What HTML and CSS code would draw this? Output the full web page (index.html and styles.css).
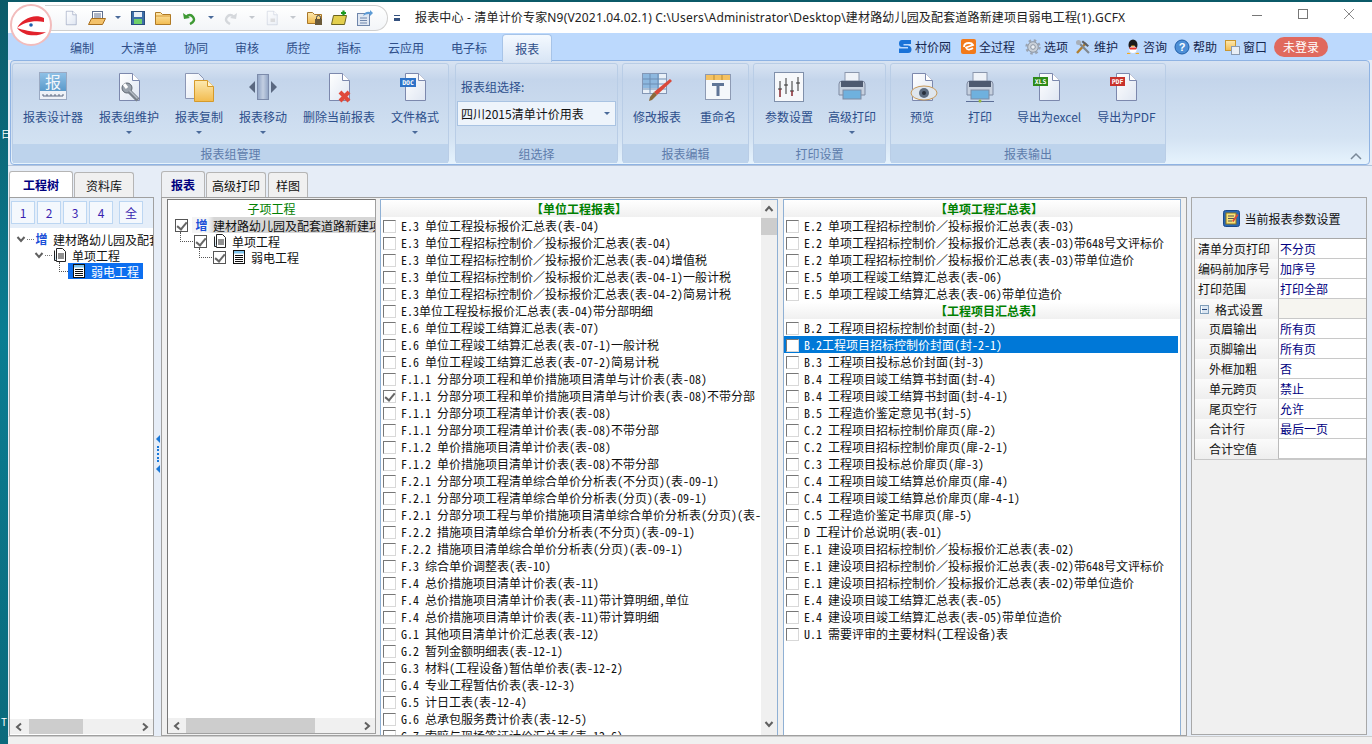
FILE: index.html
```html
<!DOCTYPE html>
<html lang="zh-CN">
<head>
    <meta charset="UTF-8">
    <title>报表中心 - 清单计价专家N9</title>
    <link rel="stylesheet" href="styles.css">
</head>
<body>

    <!-- shared icon parts -->
    <svg class="sprite" width="0" height="0">
        <defs>
            <linearGradient id="gPage" x1="0" y1="0" x2="1" y2="1"><stop offset="0" stop-color="#ffffff"/><stop offset="1" stop-color="#dfe6f2"/></linearGradient>
            <linearGradient id="gYellow" x1="0" y1="0" x2="0" y2="1"><stop offset="0" stop-color="#fde9b0"/><stop offset="1" stop-color="#f2bb4e"/></linearGradient>
            <linearGradient id="gBlue" x1="0" y1="0" x2="0" y2="1"><stop offset="0" stop-color="#8fc0e6"/><stop offset="1" stop-color="#5a9acb"/></linearGradient>
            <linearGradient id="gSteel" x1="0" y1="0" x2="1" y2="0"><stop offset="0" stop-color="#8fa3c4"/><stop offset="0.5" stop-color="#c3cfe2"/><stop offset="1" stop-color="#8fa3c4"/></linearGradient>
            <symbol id="page" viewBox="0 0 32 32"><path d="M6.5 2.5h13l7 7v20h-20z" fill="url(#gPage)" stroke="#7c88ad"/><path d="M19.5 2.5v7h7" fill="#fff" stroke="#7c88ad"/></symbol>
            <symbol id="printer" viewBox="0 0 32 32">
                <rect x="9" y="1.5" width="14" height="11" fill="#eef2f8" stroke="#8b97ad"/>
                <path d="M3 13q0-3 3-3h20q3 0 3 3v11H3z" fill="#c6d0de" stroke="#7f8ba3"/>
                <rect x="5" y="10" width="22" height="6" fill="#4e5a70"/>
                <rect x="7" y="19" width="18" height="9" fill="#6fb1de" stroke="#7f8ba3"/>
            </symbol>
            <symbol id="chev-left" viewBox="0 0 10 10"><path d="M7 1.5L3 5l4 3.5" fill="none" stroke="#606060" stroke-width="2"/></symbol>
            <symbol id="chev-right" viewBox="0 0 10 10"><path d="M3 1.5L7 5 3 8.5" fill="none" stroke="#606060" stroke-width="2"/></symbol>
            <symbol id="chev-up" viewBox="0 0 10 10"><path d="M1.5 7L5 3l3.5 4" fill="none" stroke="#606060" stroke-width="2"/></symbol>
            <symbol id="chev-down" viewBox="0 0 10 10"><path d="M1.5 3L5 7l3.5-4" fill="none" stroke="#606060" stroke-width="2"/></symbol>
            <symbol id="node-multi" viewBox="0 0 14 14"><path d="M3.5 .5h6l3 3v10h-9z" fill="#fff" stroke="#222"/><path d="M1.5 2.5v10h2" fill="#cfe8f7" stroke="#222"/><path d="M5 6h6M5 8h6M5 10h6" stroke="#222"/></symbol>
            <symbol id="node-sheet" viewBox="0 0 14 14"><rect x="1.5" y=".5" width="11" height="13" fill="#fff" stroke="#111"/><rect x="2" y="1" width="10" height="2.5" fill="#7fc4ee"/><path d="M3 5.5h8M3 7.5h8M3 9.5h8M3 11.5h8" stroke="#111"/></symbol>
        </defs>
    </svg>

    <span class="desk-glyph desk-top">日</span>
    <span class="desk-glyph desk-bottom">T</span>

    <div class="window">

        <!-- Title bar -->
        <div class="titlebar">
            <svg class="logo" viewBox="0 0 42 42">
                <circle cx="21" cy="21" r="20" fill="#fff" stroke="#f2bcbc" stroke-width="2"/>
                <path d="M34 14C24 9 12 15 7 24 13 19 23 16 34 18z" fill="#e2222c"/>
                <path d="M7 24c7 2 17 5 29 4-8 5-22 5-29-4z" fill="#e2222c"/>
                <circle cx="21" cy="21" r="1.800" fill="#1d5fae"/>
            </svg>
            <div class="qat">
                <span class="qi w26"><svg width="16" height="16" viewBox="0 0 32 32"><use href="#page"/></svg></span>
                <span class="qi w26"><svg width="18" height="16" viewBox="0 0 18 16"><rect x="4.5" y="1.5" width="10" height="9" fill="#fff" stroke="#5e6f8f"/><path d="M6 4h7M6 6h7M6 8h7" stroke="#5e6f8f"/><path d="M.5 14.500l3-6h14l-3 6z" fill="#f3c26b" stroke="#a86f1e"/></svg></span>
                <span class="qi w16"><i class="caret"></i></span>
                <span class="qi w24"><svg width="14" height="14" viewBox="0 0 14 14"><rect x=".5" y=".5" width="13" height="13" fill="#3c6ea8" stroke="#2a4e7e"/><rect x="3" y="1" width="8" height="5" fill="#e8eef7"/><rect x="3" y="8" width="8" height="5" fill="#6fd06a"/></svg></span>
                <span class="qi w26"><svg width="16" height="14" viewBox="0 0 16 14"><path d="M.5 13.500v-12h5l2 2h8v10z" fill="url(#gYellow)" stroke="#b07a25"/><path d="M1 5h14" stroke="#d99a35"/></svg></span>
                <span class="qi w26"><svg width="14" height="14" viewBox="0 0 14 14"><path d="M4 6q4-4 7 0t-3 7" fill="none" stroke="#3f9a34" stroke-width="2.400"/><path d="M1 2l1 6 6-1z" fill="#3f9a34"/></svg></span>
                <span class="qi w18"><i class="caret"></i></span>
                <span class="qi w22"><svg width="14" height="14" viewBox="0 0 14 14"><path d="M10 6q-4-4-7 0t3 7" fill="none" stroke="#d5d8dc" stroke-width="2.400"/><path d="M13 2l-1 6-6-1z" fill="#d5d8dc"/></svg></span>
                <span class="qi w20"><i class="caret off"></i></span>
                <span class="qi w20"><svg width="16" height="16" viewBox="0 0 32 32" opacity=".45"><use href="#page"/><rect x="13" y="17" width="9" height="7" fill="#bbb"/></svg></span>
                <span class="qi w22"><i class="caret off"></i></span>
                <span class="qi w22"><svg width="16" height="16" viewBox="0 0 16 16"><path d="M.5 13.500v-11h5l2 2h7v9z" fill="url(#gYellow)" stroke="#a8772a"/><rect x="8" y="9" width="7" height="6" fill="#6b5a3a"/><path d="M9.500 9V7.500a2 2 0 0 1 4 0V9" fill="none" stroke="#444"/></svg></span>
                <span class="qi w26"><svg width="16" height="16" viewBox="0 0 16 16"><path d="M.5 14.500l2-9h13l-2 9z" fill="#e3cf4e" stroke="#6b6320"/><path d="M10 3h5M12.500 .5v5" stroke="#1e9a22" stroke-width="2.200"/></svg></span>
                <span class="qi w26"><svg width="16" height="16" viewBox="0 0 16 16"><rect x=".5" y="3.500" width="12" height="12" fill="#dfe7f2" stroke="#6f86ab"/><path d="M3 8h7M3 10.500h7M3 13h7" stroke="#6f86ab"/><path d="M6 6q2-5 7-4V0l3 3-3 3V4q-4-.5-7 2z" fill="#5d9bd5"/></svg></span>
            </div>
            <span class="qat-more"></span>
            <span class="title-text">报表中心 - 清单计价专家N9(V2021.04.02.1) C:\Users\Administrator\Desktop\建材路幼儿园及配套道路新建项目弱电工程(1).GCFX</span>
            <div class="win-btns">
                <span class="win-btn"><svg width="12" height="12" viewBox="0 0 12 12"><path d="M1 6.500h10" stroke="#777"/></svg></span>
                <span class="win-btn"><svg width="12" height="12" viewBox="0 0 12 12"><rect x="1.500" y=".5" width="9" height="9" fill="none" stroke="#777"/></svg></span>
                <span class="win-btn"><svg width="12" height="12" viewBox="0 0 12 12"><path d="M1 0l10 10M11 0L1 10" stroke="#888"/></svg></span>
            </div>
        </div>

        <!-- Ribbon tabs -->
        <div class="tabrow">
            <span class="rtab">编制</span>
            <span class="rtab">大清单</span>
            <span class="rtab">协同</span>
            <span class="rtab">审核</span>
            <span class="rtab">质控</span>
            <span class="rtab">指标</span>
            <span class="rtab">云应用</span>
            <span class="rtab">电子标</span>
            <span class="rtab active">报表</span>

            <div class="tools">
                <span class="tool"><svg width="14" height="16" viewBox="0 0 14 16"><path d="M13 1H4Q1 1 1 4.500T4 8h6v1.500H1V14h9q3.500 0 3.500-3.500T10 6.500H5.500V5H13z" fill="#1a73d8"/></svg>村价网</span>
                <span class="tool tool-wide"><svg width="15" height="15" viewBox="0 0 15 15"><rect width="15" height="15" rx="2" fill="#f27a1a"/><path d="M3 8q0-4 5-4 3 0 4 2L5 8.500q1 2.500 3.500 2 2-.5 3.500-1.500" fill="none" stroke="#fff" stroke-width="1.800"/></svg>全过程</span>
                <span class="tool tool-wide"><svg width="16" height="16" viewBox="0 0 16 16"><circle cx="8" cy="8" r="5.300" fill="#c9d0d8" stroke="#8a94a2" stroke-width="1"/><circle cx="8" cy="8" r="6.500" fill="none" stroke="#9aa4b2" stroke-width="2.400" stroke-dasharray="2.500 2.600"/><circle cx="8" cy="8" r="2.300" fill="#eef2f6" stroke="#8a94a2"/></svg>选项</span>
                <span class="tool tool-tight"><svg width="16" height="16" viewBox="0 0 16 16"><path d="M2 14L11 4" stroke="#b07e2e" stroke-width="2.400"/><path d="M8 1.500l6 5-1.500 1.500-6-5z" fill="#5a5f68"/><path d="M14 14L5 5" stroke="#808890" stroke-width="2.200"/><circle cx="3.500" cy="3.500" r="2.500" fill="#a8afb8"/></svg>维护</span>
                <span class="tool"><svg width="14" height="16" viewBox="0 0 14 16"><ellipse cx="7" cy="6" rx="4.500" ry="5.500" fill="#1b1b1b"/><ellipse cx="7" cy="10.500" rx="3.600" ry="3.500" fill="#fff"/><path d="M3 8.500h8l-1 2H4z" fill="#e8312a"/><path d="M1 14q2-1 4 1H1zM13 14q-2-1-4 1h4z" fill="#f6a81c"/><path d="M5 6.500h4L7 8z" fill="#f6a81c"/></svg>咨询</span>
                <span class="tool tool-tight"><svg width="16" height="16" viewBox="0 0 16 16"><circle cx="8" cy="8" r="7" fill="#4d8fd6" stroke="#1f5ea8"/><text x="8" y="12" class="svg-help">?</text></svg>帮助</span>
                <span class="tool"><svg width="15" height="16" viewBox="0 0 15 16"><rect x=".5" y="1.500" width="10" height="10" fill="url(#gYellow)" stroke="#c9962f"/><rect x="6.500" y="7.500" width="8" height="8" fill="#e9eef5" stroke="#8a9ab0"/></svg>窗口</span>
                <span class="login-pill">未登录</span>
            </div>
        </div>

        <!-- Ribbon -->
        <div class="ribbon">
            <div class="group g-manage">
                <div class="group-body">
                    <div class="rbtn">
                        <svg width="32" height="32" viewBox="0 0 32 32"><rect x="2.500" y="1.500" width="27" height="27" fill="#eef2f8" stroke="#9aa9c2"/><rect x="3" y="2" width="26" height="18" fill="url(#gBlue)"/><text x="16" y="17" class="svg-bao">报</text><path d="M6 25h20M6 25v-2M10 25v-2M14 25v-2M18 25v-2M22 25v-2M26 25v-2" stroke="#5d6b83" fill="none"/></svg>
                        <span class="rlabel">报表设计器</span>
                    </div>
                    <div class="rbtn">
                        <svg width="32" height="32" viewBox="0 0 32 32"><use href="#page"/><circle cx="14" cy="17" r="5" fill="#9aa2ac" stroke="#5e6670"/><path d="M11 13l3 4" stroke="#fff" stroke-width="3"/><path d="M16 20l9 9" stroke="#79818b" stroke-width="4.500"/><path d="M16.500 19.500l8 8" stroke="#b7bec7" stroke-width="1.500"/></svg>
                        <span class="rlabel">报表组维护</span>
                        <i class="caret"></i>
                    </div>
                    <div class="rbtn">
                        <svg width="32" height="32" viewBox="0 0 32 32"><path d="M2.500 2.500h13l5 5v20h-18z" fill="url(#gPage)" stroke="#8c97b5"/><path d="M11.500 9.500h13l6 6v15h-19z" fill="url(#gYellow)" stroke="#d59a2b"/><path d="M24.500 9.500v6h6" fill="#fff3cf" stroke="#d59a2b"/></svg>
                        <span class="rlabel">报表复制</span>
                        <i class="caret"></i>
                    </div>
                    <div class="rbtn">
                        <svg width="32" height="32" viewBox="0 0 32 32"><rect x="10.500" y="3.500" width="11" height="25" fill="url(#gSteel)" stroke="#7c8bab"/><path d="M8 10v12l-6-6zM24 10v12l6-6z" fill="#5a6880"/></svg>
                        <span class="rlabel">报表移动</span>
                        <i class="caret"></i>
                    </div>
                    <div class="rbtn">
                        <svg width="32" height="32" viewBox="0 0 32 32"><use href="#page"/><path d="M17 21l9 9M26 21l-9 9" stroke="#e0493a" stroke-width="4"/></svg>
                        <span class="rlabel">删除当前报表</span>
                    </div>
                    <div class="rbtn">
                        <svg width="32" height="32" viewBox="0 0 32 32"><use href="#page"/><rect x="1" y="7" width="16" height="9" fill="#2e73c8"/><text x="9" y="14" class="svg-tag">DOC</text></svg>
                        <span class="rlabel">文件格式</span>
                        <i class="caret"></i>
                    </div>
                </div>
                <div class="group-foot">报表组管理</div>
            </div>

            <div class="group g-select">
                <div class="group-body select-body">
                    <span class="select-label">报表组选择:</span>
                    <div class="select-box"><span>四川2015清单计价用表</span><i class="caret"></i></div>
                </div>
                <div class="group-foot">组选择</div>
            </div>

            <div class="group g-edit">
                <div class="group-body">
                    <div class="rbtn">
                        <svg width="32" height="32" viewBox="0 0 32 32"><rect x="1.500" y="2.500" width="24" height="20" fill="#e9f0f8" stroke="#8497b5"/><rect x="2" y="3" width="16" height="14" fill="#8db8df"/><path d="M2 8h23M2 13h23M2 18h23M9 3v19M17 3v19" stroke="#6d8db3"/><path d="M29 8l2 2-15 14-3-3z" fill="#d9493a"/><path d="M13 21l3 3-5 5-3 1 1-4z" fill="#8a6a3a"/></svg>
                        <span class="rlabel">修改报表</span>
                    </div>
                    <div class="rbtn">
                        <svg width="32" height="32" viewBox="0 0 32 32"><rect x="3.500" y="3.500" width="25" height="25" fill="#f4f7fb" stroke="#8d9ab3"/><rect x="4" y="4" width="24" height="5" fill="#f4c161"/><path d="M12 4v5M20 4v5" stroke="#b98a31"/><path d="M10 12h12v3h-4.500v10h-3V15H10z" fill="#5f7597"/></svg>
                        <span class="rlabel">重命名</span>
                    </div>
                </div>
                <div class="group-foot">报表编辑</div>
            </div>

            <div class="group g-print">
                <div class="group-body">
                    <div class="rbtn">
                        <svg width="32" height="32" viewBox="0 0 32 32"><rect x="1.500" y="1.500" width="29" height="29" fill="#f6f8fb" stroke="#8090ab"/><path d="M7 10v16M13 7v16M19 10v15M25 6v14" stroke="#333"/><path d="M5 18h4M11 14h4M17 20h4M23 12h4" stroke="#333"/><path d="M7 18v8M19 20v5" stroke="#b0202c"/></svg>
                        <span class="rlabel">参数设置</span>
                    </div>
                    <div class="rbtn">
                        <svg width="32" height="32" viewBox="0 0 32 32"><use href="#printer"/></svg>
                        <span class="rlabel">高级打印</span>
                        <i class="caret"></i>
                    </div>
                </div>
                <div class="group-foot">打印设置</div>
            </div>

            <div class="group g-output">
                <div class="group-body">
                    <div class="rbtn btn-short">
                        <svg width="32" height="32" viewBox="0 0 32 32"><use href="#page"/><ellipse cx="18" cy="22" rx="13" ry="7" fill="#dfe6ee" stroke="#c89a5a"/><circle cx="18" cy="22" r="5" fill="#5d6c80"/><circle cx="18" cy="22" r="2" fill="#27303c"/></svg>
                        <span class="rlabel">预览</span>
                    </div>
                    <div class="rbtn btn-short">
                        <svg width="32" height="32" viewBox="0 0 32 32"><use href="#printer"/><path d="M2 30.500h28" stroke="#5c6e96"/><circle cx="16" cy="30" r="1.500" fill="#9ab83a"/></svg>
                        <span class="rlabel">打印</span>
                    </div>
                    <div class="rbtn btn-excel">
                        <svg width="32" height="32" viewBox="0 0 32 32"><use href="#page"/><rect x="0" y="6" width="15" height="9" fill="#2e8b17"/><text x="7.500" y="13" class="svg-tag">XLS</text></svg>
                        <span class="rlabel">导出为excel</span>
                    </div>
                    <div class="rbtn btn-pdf">
                        <svg width="32" height="32" viewBox="0 0 32 32"><use href="#page"/><rect x="0" y="6" width="15" height="9" fill="#c8322c"/><text x="7.500" y="13" class="svg-tag">PDF</text></svg>
                        <span class="rlabel">导出为PDF</span>
                    </div>
                </div>
                <div class="group-foot">报表输出</div>
            </div>

            <div class="ribbon-rest">
                <svg class="collapse" width="12" height="8" viewBox="0 0 12 8"><path d="M1 7l5-5 5 5" fill="none" stroke="#7a8898" stroke-width="1.500"/></svg>
            </div>
        </div>

        <!-- Main area -->
        <div class="main">

            <div class="side">
                <div class="tabs">
                    <span class="tab active">工程树</span>
                    <span class="tab tab-lib">资料库</span>
                </div>
                <div class="side-panel">
                    <div class="level-bar">
                        <span class="level">1</span>
                        <span class="level">2</span>
                        <span class="level">3</span>
                        <span class="level">4</span>
                        <span class="level level-all">全</span>
                    </div>
                    <div class="tree side-tree">
                        <div class="tree-row">
                            <svg class="twist" width="10" height="10"><use href="#chev-down"/></svg>
                            <i class="dots"></i>
                            <span class="zeng">增</span>
                            <span class="tree-text">建材路幼儿园及配套道路新建项目</span>
                        </div>
                        <div class="tree-row row-2">
                            <svg class="twist" width="10" height="10"><use href="#chev-down"/></svg>
                            <i class="dots"></i>
                            <svg class="node" width="14" height="14"><use href="#node-multi"/></svg>
                            <span class="tree-text">单项工程</span>
                        </div>
                        <div class="tree-row row-3">
                            <i class="elbow"></i>
                            <span class="tree-sel"><svg class="node" width="14" height="14"><use href="#node-sheet"/></svg><span>弱电工程</span></span>
                        </div>
                    </div>
                    <div class="hscroll side-scroll">
                        <svg width="10" height="10"><use href="#chev-left"/></svg>
                        <span class="track"><b class="thumb"></b></span>
                        <svg width="10" height="10"><use href="#chev-right"/></svg>
                    </div>
                </div>
            </div>

            <div class="splitter">
                <i class="grip-arrow"></i>
                <i class="grip-dots"></i>
                <i class="grip-arrow"></i>
            </div>

            <div class="center">
                <div class="tabs">
                    <span class="tab active tab-report">报表</span>
                    <span class="tab tab-print">高级打印</span>
                    <span class="tab tab-sample">样图</span>
                </div>
                <div class="frame">

                    <div class="child-panel">
                        <div class="child-head">子项工程</div>
                        <div class="tree child-tree">
                            <div class="tree-row">
                                <i class="tick-box on"></i>
                                <span class="tree-first"><span class="zeng">增</span><span class="tree-text">建材路幼儿园及配套道路新建项目弱电工程</span></span>
                            </div>
                            <div class="tree-row row-2">
                                <i class="elbow"></i>
                                <i class="tick-box on"></i>
                                <svg class="node" width="14" height="14"><use href="#node-multi"/></svg>
                                <span class="tree-text">单项工程</span>
                            </div>
                            <div class="tree-row row-3">
                                <i class="elbow"></i>
                                <i class="tick-box on"></i>
                                <svg class="node" width="14" height="14"><use href="#node-sheet"/></svg>
                                <span class="tree-text">弱电工程</span>
                            </div>
                        </div>
                        <div class="hscroll child-scroll">
                            <svg width="10" height="10"><use href="#chev-left"/></svg>
                            <span class="track"><b class="thumb"></b></span>
                            <svg width="10" height="10"><use href="#chev-right"/></svg>
                        </div>
                    </div>

                    <div class="report-list list-a">
                        <div class="list-scroll-area">
                            <div class="list-head">【单位工程报表】</div>
                            <ul class="rows">
                                <li><i class="cb"></i>E.3 单位工程投标报价汇总表(表-04)</li>
                                <li><i class="cb"></i>E.3 单位工程招标控制价<span class="fw">／</span>投标报价汇总表(表-04)</li>
                                <li><i class="cb"></i>E.3 单位工程招标控制价<span class="fw">／</span>投标报价汇总表(表-04)增值税</li>
                                <li><i class="cb"></i>E.3 单位工程招标控制价<span class="fw">／</span>投标报价汇总表(表-04-1)一般计税</li>
                                <li><i class="cb"></i>E.3 单位工程招标控制价<span class="fw">／</span>投标报价汇总表(表-04-2)简易计税</li>
                                <li><i class="cb"></i>E.3单位工程投标报价汇总表(表-04)带分部明细</li>
                                <li><i class="cb"></i>E.6 单位工程竣工结算汇总表(表-07)</li>
                                <li><i class="cb"></i>E.6 单位工程竣工结算汇总表(表-07-1)一般计税</li>
                                <li><i class="cb"></i>E.6 单位工程竣工结算汇总表(表-07-2)简易计税</li>
                                <li><i class="cb"></i>F.1.1 分部分项工程和单价措施项目清单与计价表(表-08)</li>
                                <li><i class="cb checked"></i>F.1.1 分部分项工程和单价措施项目清单与计价表(表-08)不带分部</li>
                                <li><i class="cb"></i>F.1.1 分部分项工程清单计价表(表-08)</li>
                                <li><i class="cb"></i>F.1.1 分部分项工程清单计价表(表-08)不带分部</li>
                                <li><i class="cb"></i>F.1.2 单价措施项目清单计价表(表-08)</li>
                                <li><i class="cb"></i>F.1.2 单价措施项目清单计价表(表-08)不带分部</li>
                                <li><i class="cb"></i>F.2.1 分部分项工程清单综合单价分析表(不分页)(表-09-1)</li>
                                <li><i class="cb"></i>F.2.1 分部分项工程清单综合单价分析表(分页)(表-09-1)</li>
                                <li><i class="cb"></i>F.2.1 分部分项工程与单价措施项目清单综合单价分析表(分页)(表-09-1)</li>
                                <li><i class="cb"></i>F.2.2 措施项目清单综合单价分析表(不分页)(表-09-1)</li>
                                <li><i class="cb"></i>F.2.2 措施项目清单综合单价分析表(分页)(表-09-1)</li>
                                <li><i class="cb"></i>F.3 综合单价调整表(表-10)</li>
                                <li><i class="cb"></i>F.4 总价措施项目清单计价表(表-11)</li>
                                <li><i class="cb"></i>F.4 总价措施项目清单计价表(表-11)带计算明细,单位</li>
                                <li><i class="cb"></i>F.4 总价措施项目清单计价表(表-11)带计算明细</li>
                                <li><i class="cb"></i>G.1 其他项目清单计价汇总表(表-12)</li>
                                <li><i class="cb"></i>G.2 暂列金额明细表(表-12-1)</li>
                                <li><i class="cb"></i>G.3 材料(工程设备)暂估单价表(表-12-2)</li>
                                <li><i class="cb"></i>G.4 专业工程暂估价表(表-12-3)</li>
                                <li><i class="cb"></i>G.5 计日工表(表-12-4)</li>
                                <li><i class="cb"></i>G.6 总承包服务费计价表(表-12-5)</li>
                                <li><i class="cb"></i>G.7 索赔与现场签证计价汇总表(表-12-6)</li>
                            </ul>
                        </div>
                        <div class="vscroll">
                            <svg width="10" height="10"><use href="#chev-up"/></svg>
                            <span class="vtrack"><b class="vthumb"></b></span>
                            <svg width="10" height="10"><use href="#chev-down"/></svg>
                        </div>
                    </div>

                    <div class="report-list list-b">
                        <div class="list-scroll-area">
                            <div class="list-head">【单项工程汇总表】</div>
                            <ul class="rows">
                                <li><i class="cb"></i>E.2 单项工程招标控制价<span class="fw">／</span>投标报价汇总表(表-03)</li>
                                <li><i class="cb"></i>E.2 单项工程招标控制价<span class="fw">／</span>投标报价汇总表(表-03)带648号文评标价</li>
                                <li><i class="cb"></i>E.2 单项工程招标控制价<span class="fw">／</span>投标报价汇总表(表-03)带单位造价</li>
                                <li><i class="cb"></i>E.5 单项工程竣工结算汇总表(表-06)</li>
                                <li><i class="cb"></i>E.5 单项工程竣工结算汇总表(表-06)带单位造价</li>
                            </ul>
                            <div class="list-head">【工程项目汇总表】</div>
                            <ul class="rows">
                                <li><i class="cb"></i>B.2 工程项目招标控制价封面(封-2)</li>
                                <li class="selected"><i class="cb"></i>B.2工程项目招标控制价封面(封-2-1)</li>
                                <li><i class="cb"></i>B.3 工程项目投标总价封面(封-3)</li>
                                <li><i class="cb"></i>B.4 工程项目竣工结算书封面(封-4)</li>
                                <li><i class="cb"></i>B.4 工程项目竣工结算书封面(封-4-1)</li>
                                <li><i class="cb"></i>B.5 工程造价鉴定意见书(封-5)</li>
                                <li><i class="cb"></i>C.2 工程项目招标控制价扉页(扉-2)</li>
                                <li><i class="cb"></i>C.2 工程项目招标控制价扉页(扉-2-1)</li>
                                <li><i class="cb"></i>C.3 工程项目投标总价扉页(扉-3)</li>
                                <li><i class="cb"></i>C.4 工程项目竣工结算总价扉页(扉-4)</li>
                                <li><i class="cb"></i>C.4 工程项目竣工结算总价扉页(扉-4-1)</li>
                                <li><i class="cb"></i>C.5 工程造价鉴定书扉页(扉-5)</li>
                                <li><i class="cb"></i>D 工程计价总说明(表-01)</li>
                                <li><i class="cb"></i>E.1 建设项目招标控制价<span class="fw">／</span>投标报价汇总表(表-02)</li>
                                <li><i class="cb"></i>E.1 建设项目招标控制价<span class="fw">／</span>投标报价汇总表(表-02)带648号文评标价</li>
                                <li><i class="cb"></i>E.1 建设项目招标控制价<span class="fw">／</span>投标报价汇总表(表-02)带单位造价</li>
                                <li><i class="cb"></i>E.4 建设项目竣工结算汇总表(表-05)</li>
                                <li><i class="cb"></i>E.4 建设项目竣工结算汇总表(表-05)带单位造价</li>
                                <li><i class="cb"></i>U.1 需要评审的主要材料(工程设备)表</li>
                            </ul>
                        </div>
                    </div>

                </div>
            </div>

            <div class="params">
                <div class="params-head">
                    <svg width="17" height="17" viewBox="0 0 17 17"><rect x=".5" y=".5" width="16" height="16" rx="2" fill="#2767b5" stroke="#1c4a8a"/><rect x="3" y="3" width="10" height="11" fill="#f7e27a" stroke="#8a7420"/><path d="M5 6h6M5 8.500h6M5 11h4" stroke="#555"/><path d="M9 11l5-7 1.500 1-5 7z" fill="#d9493a"/></svg>
                    <span>当前报表参数设置</span>
                </div>
                <div class="params-grid">
                    <span class="p-name">清单分页打印</span><span class="p-val">不分页</span>
                    <span class="p-name">编码前加序号</span><span class="p-val">加序号</span>
                    <span class="p-name">打印范围</span><span class="p-val">打印全部</span>
                    <span class="p-name p-group"><i class="minus"></i>格式设置</span><span class="p-val p-group-val"></span>
                    <span class="p-name p-sub">页眉输出</span><span class="p-val">所有页</span>
                    <span class="p-name p-sub">页脚输出</span><span class="p-val">所有页</span>
                    <span class="p-name p-sub">外框加粗</span><span class="p-val">否</span>
                    <span class="p-name p-sub">单元跨页</span><span class="p-val">禁止</span>
                    <span class="p-name p-sub">尾页空行</span><span class="p-val">允许</span>
                    <span class="p-name p-sub">合计行</span><span class="p-val">最后一页</span>
                    <span class="p-name p-sub">合计空值</span><span class="p-val"></span>
                </div>
            </div>

        </div>

        <div class="bottom-strip"></div>
    </div>

</body>
</html>
```

FILE: styles.css
```css
* {
    box-sizing: border-box;
}

body {
    margin: 0;
    height: 744px;
    overflow: hidden;
    background: linear-gradient(180deg, #0b5a68 0%, #0a7d92 45%, #0b6a7c 100%);
    font-family: "Noto Sans CJK SC", "Noto Sans", sans-serif;
    font-size: 12px;
    color: #111;
}

.sprite {
    display: block;
    height: 0;
}

.desk-glyph {
    position: absolute;
    left: 1px;
    color: #fff;
    font-size: 10px;
    line-height: 12px;
}

.desk-top { top: 128px; }
.desk-bottom { top: 716px; }

.window {
    margin: 2px 0 0 8px;
    height: 742px;
    display: flex;
    flex-direction: column;
    background: #e6edf7;
}

/* Title bar */
.titlebar {
    position: relative;
    height: 31px;
    flex: none;
    display: flex;
    align-items: center;
    background: #fff;
}

.logo {
    position: absolute;
    left: 2px;
    top: 2px;
    width: 42px;
    height: 42px;
    z-index: 5;
}

.qat {
    margin-left: 37px;
    width: 343px;
    height: 26px;
    padding-left: 13px;
    display: flex;
    align-items: center;
    border: 1px solid #cfcfcf;
    border-left: none;
    border-radius: 0 13px 13px 0;
    background: linear-gradient(180deg, #fff, #f3f5f8);
}

.qi {
    display: flex;
    justify-content: center;
    align-items: center;
    height: 20px;
}

.w16 { width: 16px; }
.w18 { width: 18px; }
.w20 { width: 20px; }
.w22 { width: 22px; }
.w24 { width: 24px; }
.w26 { width: 26px; }

.caret {
    display: block;
    width: 0;
    height: 0;
    border-left: 3px solid transparent;
    border-right: 3px solid transparent;
    border-top: 3px solid #4a6a9a;
}

.caret.off {
    border-top-color: #c4c8ce;
}

.qat-more {
    margin-left: 6px;
    width: 6px;
    height: 6px;
    border-top: 1px solid #35527f;
    border-bottom: 3px solid #35527f;
}

.title-text {
    margin-left: 15px;
    white-space: nowrap;
    font-family: "Noto Sans", "Noto Sans CJK SC", sans-serif;
    letter-spacing: 0.17px;
    line-height: 16px;
    color: #222;
}

.win-btns {
    margin-left: auto;
    display: flex;
    align-self: flex-start;
}

.win-btn {
    width: 46px;
    height: 26px;
    display: flex;
    justify-content: center;
    align-items: center;
}

/* Ribbon tabs */
.tabrow {
    height: 27px;
    flex: none;
    padding-left: 50px;
    display: flex;
    background: #bcd9fd;
}

.rtab {
    padding: 0 12px;
    margin-right: 3px;
    line-height: 30px;
    color: #2f4f8a;
}

.rtab.active {
    height: 28px;
    margin-top: 1px;
    line-height: 28px;
    border: 1px solid #a7c4e8;
    border-bottom: none;
    border-radius: 4px 4px 0 0;
    background: linear-gradient(180deg, #f4f9ff, #d8e5f5);
    z-index: 1;
}

.tools {
    margin-left: auto;
    margin-right: 44px;
    display: flex;
    align-items: center;
    gap: 8px;
}

.tool {
    display: flex;
    align-items: center;
    gap: 3px;
    color: #14264f;
    line-height: 16px;
}

.tool-wide { margin-left: 2px; }
.tool-tight { margin-left: -1px; }

.login-pill {
    width: 54px;
    height: 20px;
    margin-left: -1px;
    border-radius: 10px;
    background: #e0695e;
    color: #fff;
    text-align: center;
    line-height: 20px;
}

/* Ribbon */
.ribbon {
    height: 105px;
    flex: none;
    margin: 0 2px;
    padding: 2px 0 1px 1px;
    display: flex;
    border: 1px solid #8fb3e3;
    border-radius: 4px;
    background: linear-gradient(180deg, #d8e3f2 0%, #c4d5eb 18%, #d4e3f3 75%, #e6f3fd 100%);
}

.group {
    display: flex;
    flex-direction: column;
    margin-right: 4px;
    border: 1px solid #b9cde6;
    border-radius: 3px;
    background: linear-gradient(180deg, #d8e3f2 0%, #c4d5eb 16%, #d6e5f4 100%);
}

.group-body {
    height: 80px;
    display: flex;
    flex: none;
}

.group-foot {
    flex: 1;
    text-align: center;
    line-height: 19px;
    color: #5d7cab;
    background: #bdd3ec;
}

.g-manage { width: 437px; margin-right: 6px; }
.g-select { width: 163px; }
.g-edit { width: 127px; }
.g-print { width: 133px; }
.g-output { width: 276px; margin-right: 0; }

.g-manage .group-body { padding-left: 10px; gap: 16px; }
.g-edit .group-body { padding-left: 10px; gap: 19px; }
.g-print .group-body { padding-left: 11px; gap: 15px; }
.g-output .group-body { padding-left: 7px; gap: 10px; }

.rbtn {
    display: flex;
    flex-direction: column;
    align-items: center;
    padding-top: 7px;
}

.rlabel {
    margin-top: 6px;
    line-height: 16px;
    white-space: nowrap;
    color: #2d4f8c;
}

.rbtn .caret {
    margin-top: 6px;
}

.btn-short { width: 48px; }
.btn-excel { margin-left: 3px; }
.btn-pdf { margin-left: 6px; }

.select-body {
    flex-direction: column;
    padding-left: 1px;
}

.select-label {
    margin: 15px 0 0 4px;
    line-height: 16px;
    color: #2d4f8c;
}

.select-box {
    margin-top: 6px;
    width: 159px;
    height: 25px;
    padding: 0 5px 0 3px;
    display: flex;
    align-items: center;
    justify-content: space-between;
    border: 1px solid #a9c3e2;
    background: #eef4fb;
    color: #111;
}

.ribbon-rest {
    flex: 1;
    display: flex;
    align-items: flex-end;
    justify-content: flex-end;
    padding: 0 7px 3px 0;
}

/* Main area */
.main {
    flex: 1;
    min-height: 0;
    display: flex;
    padding: 5px 0 0 1px;
    border-top: 1px solid #b3c4dc;
}

.side {
    width: 145px;
    flex: none;
    display: flex;
    flex-direction: column;
}

.tabs {
    height: 26px;
    flex: none;
    display: flex;
    align-items: flex-end;
}

.tab {
    height: 25px;
    margin-left: 1px;
    line-height: 25px;
    text-align: center;
    border: 1px solid #b5b5b5;
    border-bottom: none;
    border-radius: 3px 3px 0 0;
    background: #f0f0f0;
    color: #111;
}

.tab.active {
    height: 26px;
    margin-left: 0;
    padding: 0 13px;
    border-color: #b5b5b5;
    background: #fff;
    color: #00007f;
    font-weight: 700;
    line-height: 26px;
}

.tab-lib { width: 60px; }
.tab-print { width: 60px; }
.tab-sample { width: 40px; margin-left: 2px; }

.tab.tab-report {
    width: 44px;
    padding: 0;
    margin-left: 0;
    background: #eef0f3;
}

.side-panel {
    flex: 1;
    display: flex;
    flex-direction: column;
    border: 1px solid #a0a0a0;
    background: #fff;
    min-height: 0;
}

.level-bar {
    height: 30px;
    flex: none;
    padding: 3px 0 0 1px;
    display: flex;
    gap: 2px;
    background: #e5eef9;
}

.level {
    width: 24px;
    height: 23px;
    border: 1px solid #bcd6f2;
    background: #f4f8fd;
    color: #3a1fb0;
    text-align: center;
    line-height: 21px;
}

.level-all {
    margin-left: 4px;
}

.tree {
    flex: 1;
    min-height: 0;
    overflow: hidden;
    color: #111;
}

.side-tree {
    padding: 3px 0 0 6px;
}

.tree-row {
    height: 16px;
    display: flex;
    align-items: center;
    white-space: nowrap;
}

.twist {
    flex: none;
}

.dots {
    width: 7px;
    margin: 0 1px;
    border-top: 1px dotted #777;
    flex: none;
}

.zeng {
    width: 13px;
    flex: none;
    color: #1a4fd8;
    font-weight: 700;
    font-size: 12px;
    line-height: 14px;
    text-align: center;
}

.tree-text {
    margin-left: 5px;
}

.node {
    flex: none;
}

.side-tree .row-2 {
    padding-left: 18px;
}

.side-tree .row-3 {
    padding-left: 43px;
}

.elbow {
    width: 9px;
    height: 10px;
    margin-top: -9px;
    flex: none;
    border-left: 1px dotted #555;
    border-bottom: 1px dotted #555;
}

.tree-sel {
    height: 16px;
    width: 75px;
    padding-left: 4px;
    flex: none;
    display: flex;
    align-items: center;
    gap: 5px;
    background: #0d6ff0;
    color: #fff;
}

.hscroll {
    height: 15px;
    flex: none;
    display: flex;
    align-items: center;
    background: #f0f0f0;
}

.hscroll svg {
    flex: none;
}

.track {
    flex: 1;
    height: 15px;
    display: block;
}

.thumb {
    display: block;
    height: 15px;
    background: #cdcdcd;
}

.side-scroll {
    margin-bottom: 1px;
    padding: 0 3px 0 4px;
}

.side-scroll .track {
    padding-left: 5px;
    padding-right: 57px;
}

.splitter {
    width: 7px;
    flex: none;
    display: flex;
    flex-direction: column;
    align-items: center;
    justify-content: center;
    gap: 3px;
    background: #e6edf7;
}

.grip-arrow {
    width: 0;
    height: 0;
    border-top: 4px solid transparent;
    border-bottom: 4px solid transparent;
    border-right: 4px solid #1a78d8;
}

.grip-dots {
    height: 16px;
    border-left: 2px dotted #1a78d8;
}

.center {
    width: 1026px;
    flex: none;
    display: flex;
    flex-direction: column;
}

.frame {
    flex: 1;
    min-height: 0;
    padding: 1px 6px 0 5px;
    display: flex;
    overflow: hidden;
    border: 1px solid #a0a0a0;
    background: #f0f0f0;
}

.child-panel {
    width: 209px;
    flex: none;
    margin-bottom: 1px;
    display: flex;
    flex-direction: column;
    border: 1px solid #a0a0a0;
    border-top-color: #777;
    border-left-color: #777;
    background: #fff;
}

.child-head {
    height: 17px;
    flex: none;
    text-align: center;
    color: #008000;
    line-height: 17px;
}

.child-tree {
    padding: 0 0 0 7px;
}

.tick-box {
    width: 13px;
    height: 13px;
    flex: none;
    position: relative;
    border: 1px solid #555;
    background: #fff;
}

.tick-box.on::after,
.cb.checked::after {
    content: "";
    position: absolute;
    left: 3px;
    top: 0;
    width: 4px;
    height: 8px;
    border-right: 2px solid #666;
    border-bottom: 2px solid #666;
    transform: rotate(40deg);
}

.tree-first {
    flex: 1;
    height: 16px;
    margin-left: 4px;
    min-width: 0;
    display: flex;
    align-items: center;
    overflow: hidden;
    background: linear-gradient(90deg, #f5f5f5 0 16px, #d6d6d6 22px);
}

.tree-first .zeng {
    margin-left: 3px;
}

.child-tree .row-2,
.child-tree .row-3 {
    gap: 1px;
}

.child-tree .row-2 { padding-left: 5px; }
.child-tree .row-3 { padding-left: 24px; }

.child-tree .elbow {
    width: 13px;
}

.child-tree .row-2 .tick-box,
.child-tree .row-3 .tick-box {
    margin-right: 5px;
}

.child-tree .row-2 .tree-text,
.child-tree .row-3 .tree-text {
    margin-left: 4px;
}

.child-scroll {
    padding: 0 3px 0 4px;
}

.child-scroll .track {
    padding-left: 4px;
    padding-right: 47px;
}

/* Report lists */
.report-list {
    margin-left: 4px;
    width: 398px;
    flex: none;
    display: flex;
    border: 1px solid #8fb0d4;
    border-bottom: none;
    background: #fff;
}

.list-b {
    margin-left: 5px;
    display: block;
}

.list-scroll-area {
    flex: 1;
    min-width: 0;
    overflow: hidden;
}

.list-head {
    height: 17px;
    text-align: center;
    line-height: 17px;
    color: #008000;
    font-weight: 700;
    background: linear-gradient(180deg, #fff, #f0f0f0);
}

.list-a .list-head { padding-left: 16px; }
.list-b .list-head { padding-left: 14px; }

.rows {
    list-style: none;
    margin: 0;
    padding: 0;
    font-feature-settings: "hwid";
}

.rows li {
    height: 17px;
    padding-left: 2px;
    white-space: pre;
    line-height: 17px;
    overflow: hidden;
}

.rows li.selected {
    margin-right: 2px;
    background: #0078d7;
    color: #fff;
}

.fw {
    font-feature-settings: normal;
}

.cb {
    display: inline-block;
    width: 13px;
    height: 13px;
    margin-right: 5px;
    vertical-align: -2px;
    position: relative;
    border: 1px solid #d8d8d8;
    border-top-color: #777;
    border-left-color: #777;
    background: #fff;
}

.vscroll {
    width: 16px;
    flex: none;
    display: flex;
    flex-direction: column;
    align-items: center;
    background: #f0f0f0;
    padding: 4px 0 6px;
}

.vtrack {
    flex: 1;
    width: 100%;
    padding-top: 4px;
}

.vthumb {
    display: block;
    height: 17px;
    background: #cdcdcd;
}

/* Parameter panel */
.params {
    width: 176px;
    flex: none;
    margin: 26px 0 1px 4px;
    display: flex;
    flex-direction: column;
    border: 1px solid #a8a8a8;
    background: #f0f0f0;
}

.params-head {
    height: 40px;
    flex: none;
    display: flex;
    align-items: center;
    justify-content: center;
    gap: 4px;
    padding-left: 6px;
    background: #e3ebf7;
}

.params-grid {
    margin: 0 0 0 2px;
    display: grid;
    grid-template-columns: 83px 1fr;
    grid-auto-rows: 20px;
    border-top: 1px solid #a8a8a8;
    border-left: 1px solid #a8a8a8;
    border-bottom: 1px solid #c8c8c8;
    background: #fff;
}

.p-name {
    padding-left: 3px;
    line-height: 19px;
    white-space: nowrap;
    background: linear-gradient(180deg, #fbfbfb, #eeeeee);
}

.p-sub {
    padding-left: 14px;
}

.p-group {
    display: flex;
    align-items: center;
    gap: 6px;
    padding-left: 5px;
}

.minus {
    width: 9px;
    height: 9px;
    border: 1px solid #7f9db9;
    background: linear-gradient(90deg, #fff 0 1px, #dbe6f2 1px);
    display: flex;
    align-items: center;
    justify-content: center;
}

.minus::before {
    content: "";
    width: 5px;
    height: 1px;
    background: #26467a;
}

.p-val {
    padding-left: 1px;
    line-height: 19px;
    color: #000080;
    border-left: 1px solid #bbb;
    border-bottom: 1px solid #c8c8c8;
}

.p-group-val {
    background: #f6f5f0;
}

.bottom-strip {
    height: 8px;
    flex: none;
    background: #f0f0f0;
    border-top: 1px solid #ccc;
}

/* Text inside icons */
.svg-bao {
    font-size: 16px;
    fill: #f1f6fb;
    text-anchor: middle;
}

.svg-tag {
    font-family: "DejaVu Sans Mono", monospace;
    font-size: 6.500px;
    font-weight: 700;
    fill: #fff;
    text-anchor: middle;
}

.svg-help {
    font-family: "Liberation Sans", sans-serif;
    font-size: 11px;
    font-weight: 700;
    fill: #fff;
    text-anchor: middle;
}
```
